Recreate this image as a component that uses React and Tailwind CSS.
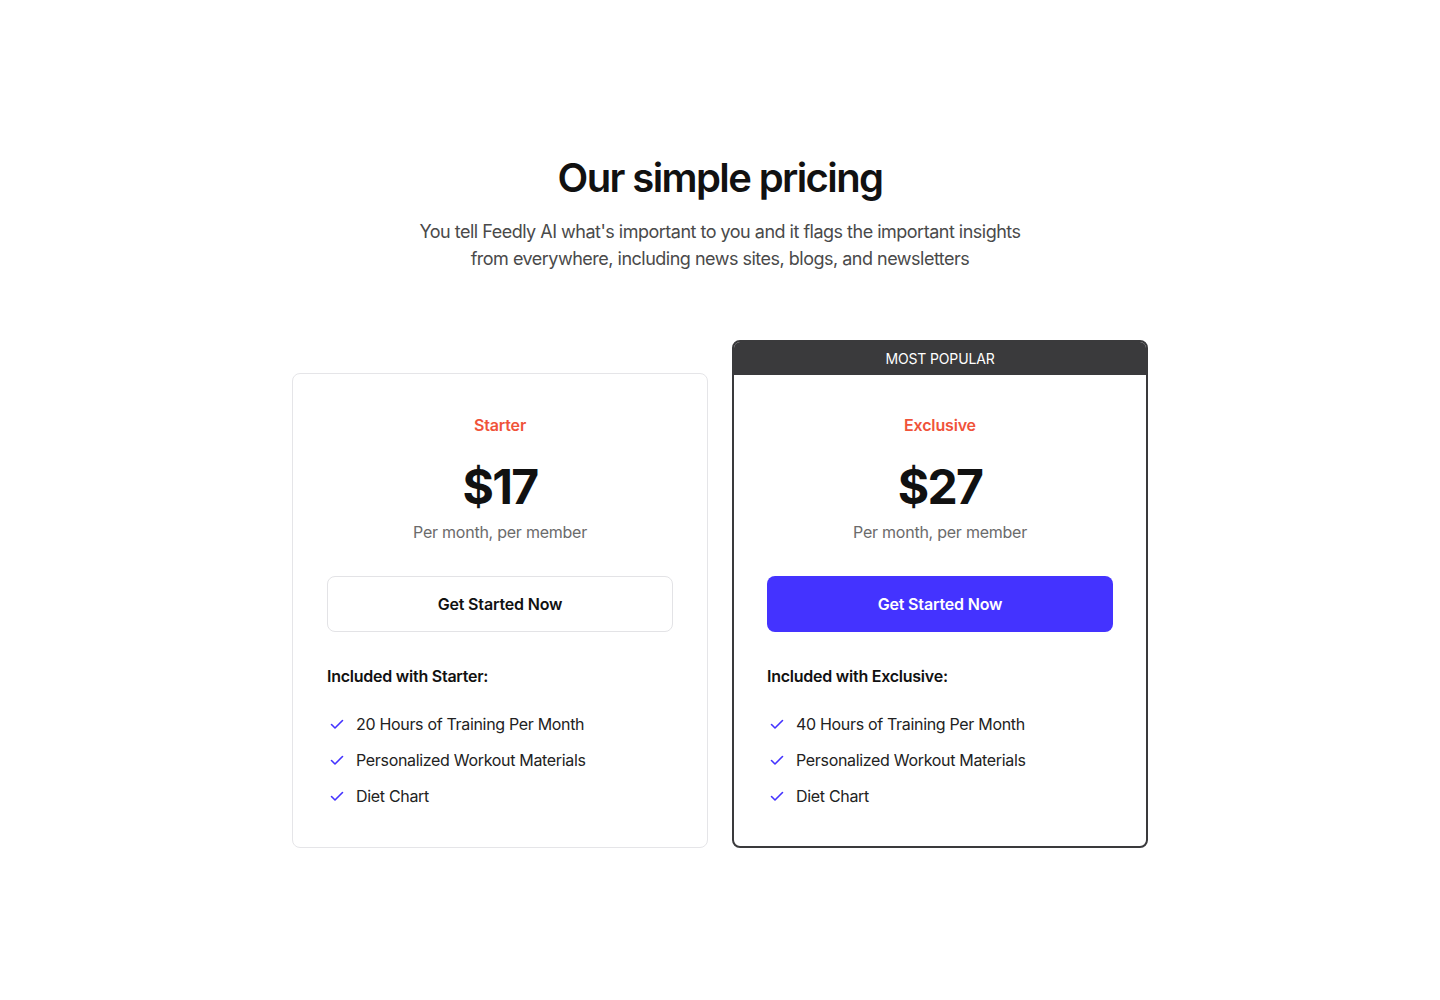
import React from "react";

function Check() {
  return (
    <svg width="16" height="16" viewBox="0 0 16 16" fill="none" className="shrink-0">
      <path d="M2.5 8.5L6 12L13.5 4.5" stroke="#4433FF" strokeWidth="1.6" strokeLinecap="round" strokeLinejoin="round" />
    </svg>
  );
}

function CardBody({ name, price, primary, items, padClass }) {
  return (
    <div className={`flex flex-col ${padClass}`}>
      <div className="text-center text-base leading-6 font-semibold tracking-[-0.01em] text-[#F0533A]">{name}</div>
      <div className="mt-[26px] text-center text-[48px] leading-[48px] font-bold tracking-[-0.035em] text-[#111111]">{price}</div>
      <div className="mt-[9px] text-center text-base leading-6 tracking-[-0.015em] text-[#6b6b6b]">Per month, per member</div>
      {primary ? (
        <button className="mt-8 h-14 w-full rounded-lg bg-[#4433FF] text-base font-semibold tracking-[-0.01em] text-white">Get Started Now</button>
      ) : (
        <button className="mt-8 h-14 w-full rounded-lg border border-[#e3e3e6] bg-white text-base font-semibold tracking-[-0.01em] text-[#111111]">Get Started Now</button>
      )}
      <div className="mt-8 text-base leading-6 font-semibold tracking-[-0.015em] text-[#111111]">Included with {name}:</div>
      <ul className="mt-6 flex flex-col gap-3">
        {items.map((it) => (
          <li key={it} className="flex items-center gap-[11px] pl-[2px] text-base leading-6 tracking-[-0.02em] text-[#222222]">
            <Check />
            <span>{it}</span>
          </li>
        ))}
      </ul>
    </div>
  );
}

export default function App() {
  return (
    <div className="min-h-[1000px] bg-white pt-[154px]" style={{ fontFamily: "Inter, 'Noto Sans', sans-serif" }}>
      <h1 className="text-center text-[40px] leading-[48px] font-semibold tracking-[-0.04em] text-[#111111]">Our simple pricing</h1>
      <p className="mx-auto mt-[16px] max-w-[620px] text-center text-lg leading-[27px] tracking-[-0.028em] text-[#4a4a4a]">
        You tell Feedly AI what's important to you and it flags the important insights from everywhere, including news sites, blogs, and newsletters
      </p>
      <div className="mx-auto mt-[68px] flex w-[856px] items-end gap-6">
        <div className="w-[416px] rounded-lg border border-[#e5e5e8] bg-white">
          <CardBody
            name="Starter"
            price="$17"
            items={["20 Hours of Training Per Month", "Personalized Workout Materials", "Diet Chart"]}
            padClass="px-[34px] pt-[39px] pb-[39px]"
          />
        </div>
        <div className="w-[416px] overflow-hidden rounded-lg border-2 border-[#3a3a3c] bg-white">
          <div className="flex h-[33px] items-center justify-center bg-[#3a3a3c] text-sm font-normal tracking-[-0.01em] text-white">MOST POPULAR</div>
          <CardBody
            name="Exclusive"
            price="$27"
            primary
            items={["40 Hours of Training Per Month", "Personalized Workout Materials", "Diet Chart"]}
            padClass="px-[33px] pt-[38px] pb-[38px]"
          />
        </div>
      </div>
    </div>
  );
}
